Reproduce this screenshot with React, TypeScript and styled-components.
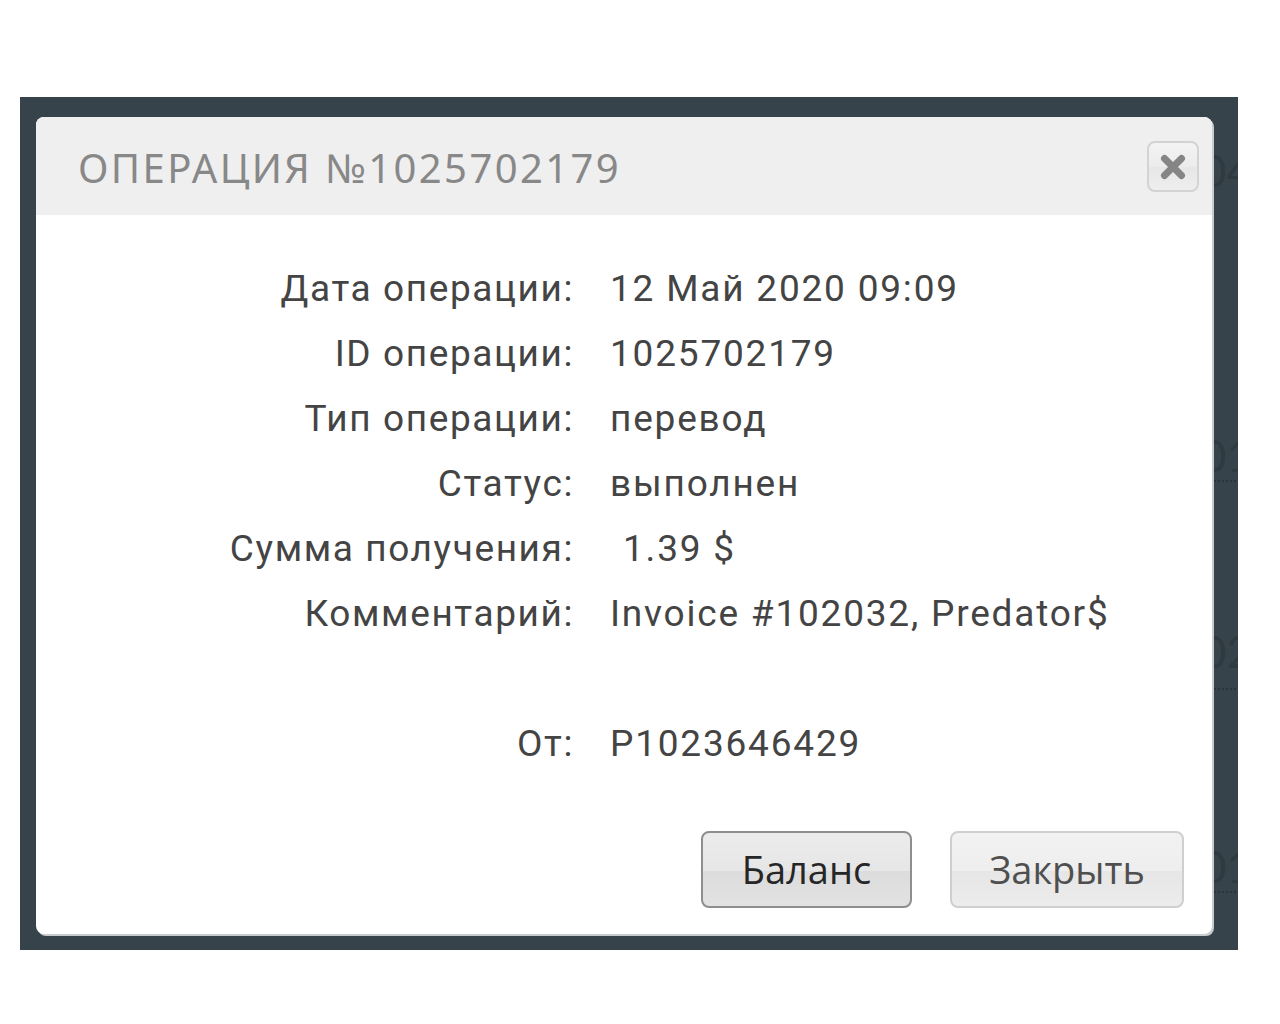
import React from "react";
import styled, { createGlobalStyle } from "styled-components";

const Global = createGlobalStyle`
  html, body { margin: 0; padding: 0; background: #ffffff; }
  body { width: 1280px; height: 1024px; overflow: hidden; }
`;

const Page = styled.div`
  width: 1280px;
  height: 1024px;
  padding-top: 97px;
  box-sizing: border-box;
`;

const Backdrop = styled.div`
  position: relative;
  margin-left: 20px;
  width: 1218px;
  height: 853px;
  background: #37434b;
  overflow: hidden;
`;

const BgList = styled.div`
  display: flex;
  flex-direction: column;
  margin-left: 1150px;
`;

const BgRow = styled.div<{ $h: number; $pb?: number; $dotted?: boolean }>`
  height: ${(p) => p.$h}px;
  display: flex;
  align-items: flex-end;
  justify-content: flex-end;
  padding-bottom: ${(p) => p.$pb ?? 0}px;
  margin-right: -14px;
  border-bottom: ${(p) => (p.$dotted ? "2px dotted rgba(30,38,44,0.5)" : "none")};
  box-sizing: border-box;
  font-family: "Lato", "Roboto", sans-serif;
  font-size: 44px;
  line-height: 46px;
  color: #2f3a40;
`;

const Modal = styled.div`
  position: absolute;
  left: 16px;
  top: 20px;
  width: 1176px;
  height: 817px;
  background: #ffffff;
  border-radius: 8px;
  box-shadow: 2px 2px 0 #c9ccce;
  display: flex;
  flex-direction: column;
  overflow: hidden;
`;

const Header = styled.div`
  height: 98px;
  flex: none;
  background: #efefef;
  display: flex;
  align-items: center;
  justify-content: space-between;
  padding: 0 13px 0 42px;
`;

const Title = styled.div`
  font-family: "Noto Sans", "DejaVu Sans", sans-serif;
  font-size: 40px;
  letter-spacing: 2.4px;
  color: #888888;
  padding-top: 2px;
`;

const CloseButton = styled.button`
  width: 52px;
  height: 51px;
  margin-top: 1px;
  border: 2px solid #d3d3d3;
  border-radius: 8px;
  background: linear-gradient(#f3f3f3, #ececec 50%, #e6e6e6 50%, #eeeeee);
  display: flex;
  align-items: center;
  justify-content: center;
  padding: 0;
  box-sizing: border-box;
`;

const Body = styled.div`
  display: grid;
  grid-template-columns: 538px 1fr;
  column-gap: 36px;
  grid-auto-rows: 65px;
  padding-top: 41px;
  font-family: "Roboto", "Open Sans", sans-serif;
  font-size: 37px;
  color: #444444;
`;

const Label = styled.div`
  display: flex;
  align-items: center;
  justify-content: flex-end;
  letter-spacing: 1.6px;
`;

const Value = styled.div<{ $indent?: number }>`
  display: flex;
  align-items: center;
  padding-left: ${(p) => p.$indent ?? 0}px;
  letter-spacing: 1.8px;
`;

const Footer = styled.div`
  display: flex;
  justify-content: flex-end;
  gap: 38px;
  padding: 55px 28px 0 0;
`;

const Button = styled.button<{ $primary?: boolean; $w: number }>`
  width: ${(p) => p.$w}px;
  height: 77px;
  box-sizing: border-box;
  border-radius: 8px;
  border: 2px solid ${(p) => (p.$primary ? "#8e8e8e" : "#cfcfcf")};
  background: ${(p) =>
    p.$primary
      ? "linear-gradient(#ececec, #e6e6e6 52%, #dcdcdc 52%, #e2e2e2)"
      : "linear-gradient(#f2f2f2, #eeeeee 52%, #e6e6e6 52%, #ececec)"};
  font-family: "Open Sans", "Noto Sans", sans-serif;
  font-size: 38px;
  color: ${(p) => (p.$primary ? "#262626" : "#4f4f4f")};
  padding: 0 0 2px 0;
`;

const rows: [string, string, number?][] = [
  ["Дата операции:", "12 Май 2020 09:09"],
  ["ID операции:", "1025702179"],
  ["Тип операции:", "перевод"],
  ["Статус:", "выполнен"],
  ["Сумма получения:", "1.39 $", 13],
  ["Комментарий:", "Invoice #102032, Predator$"],
  ["", ""],
  ["От:", "P1023646429"],
];

export default function App() {
  return (
    <Page>
      <Global />
      <Backdrop>
        <BgList>
          <BgRow $h={98} $pb={2}>04</BgRow>
          <BgRow $h={287} $pb={2} $dotted>01</BgRow>
          <BgRow $h={208} $pb={14} $dotted>02</BgRow>
          <BgRow $h={203} $pb={2} $dotted>01</BgRow>
        </BgList>
        <Modal>
          <Header>
            <Title>ОПЕРАЦИЯ №1025702179</Title>
            <CloseButton aria-label="close">
              <svg width="28" height="28" viewBox="0 0 28 28">
                <path
                  d="M5.5 5.5 L22.5 22.5 M22.5 5.5 L5.5 22.5"
                  stroke="#858585"
                  strokeWidth="7"
                  strokeLinecap="round"
                />
              </svg>
            </CloseButton>
          </Header>
          <Body>
            {rows.map(([l, v, ind], i) => (
              <React.Fragment key={i}>
                <Label>{l}</Label>
                <Value $indent={ind}>{v}</Value>
              </React.Fragment>
            ))}
          </Body>
          <Footer>
            <Button $primary $w={211}>Баланс</Button>
            <Button $w={234}>Закрыть</Button>
          </Footer>
        </Modal>
      </Backdrop>
    </Page>
  );
}
